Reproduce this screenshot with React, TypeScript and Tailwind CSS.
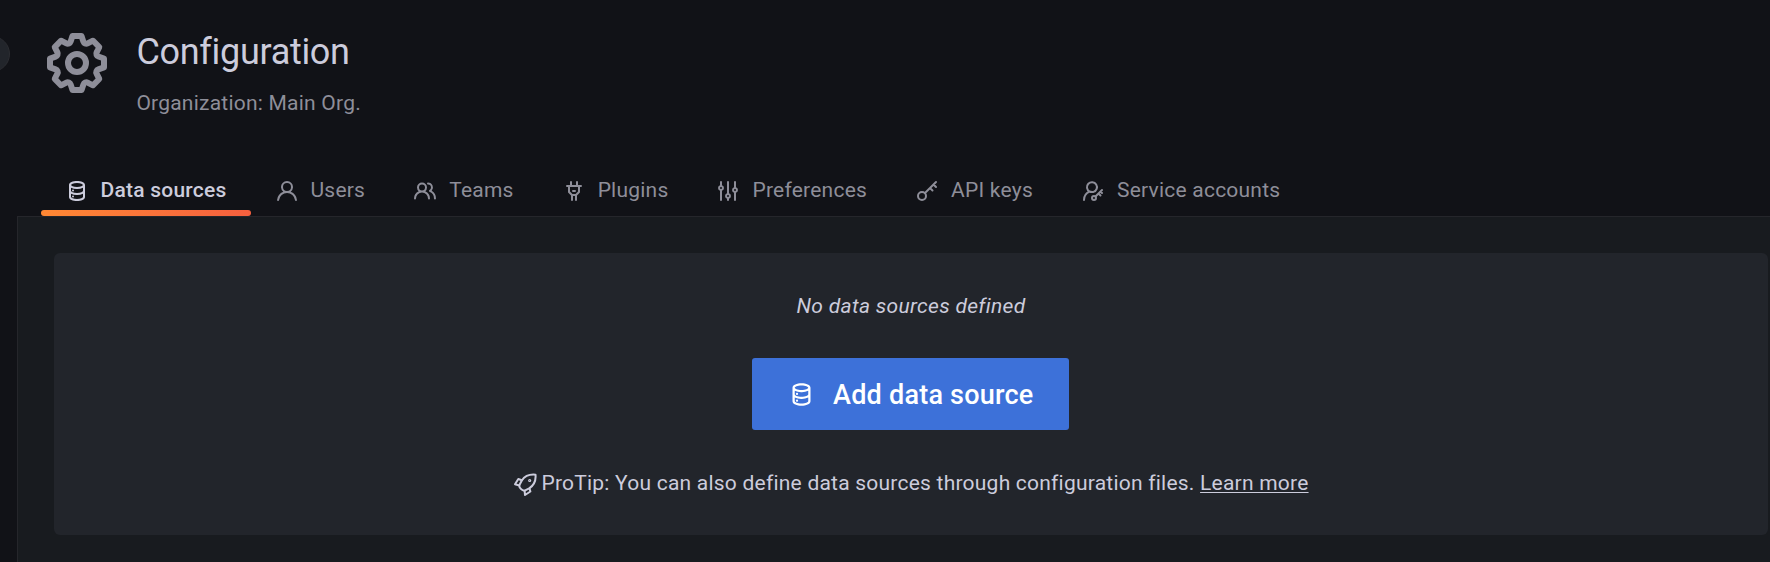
import type { ReactNode } from "react";

const paths = {
  cog: "M21.32,9.55l-1.89-.63.89-1.78A1,1,0,0,0,20.13,6L18,3.87a1,1,0,0,0-1.15-.19l-1.78.89-.63-1.89A1,1,0,0,0,13.5,2h-3a1,1,0,0,0-.95.68L8.92,4.57,7.14,3.68A1,1,0,0,0,6,3.87L3.87,6a1,1,0,0,0-.19,1.15l.89,1.78-1.89.63A1,1,0,0,0,2,10.5v3a1,1,0,0,0,.68.95l1.89.63-.89,1.78A1,1,0,0,0,3.87,18L6,20.13a1,1,0,0,0,1.15.19l1.78-.89.63,1.89a1,1,0,0,0,.95.68h3a1,1,0,0,0,.95-.68l.63-1.89,1.78.89A1,1,0,0,0,18,20.13L20.13,18a1,1,0,0,0,.19-1.15l-.89-1.78,1.89-.63A1,1,0,0,0,22,13.5v-3A1,1,0,0,0,21.32,9.55ZM20,12.78l-1.2.4A2,2,0,0,0,17.64,16l.57,1.14-1.1,1.1L16,17.64a2,2,0,0,0-2.79,1.16l-.4,1.2H11.22l-.4-1.2A2,2,0,0,0,8,17.64l-1.14.57-1.1-1.1L6.36,16A2,2,0,0,0,5.2,13.18L4,12.78V11.22l1.2-.4A2,2,0,0,0,6.36,8L5.79,6.89l1.1-1.1L8,6.36A2,2,0,0,0,10.82,5.2l.4-1.2h1.56l.4,1.2A2,2,0,0,0,16,6.36l1.14-.57,1.1,1.1L17.64,8a2,2,0,0,0,1.16,2.79l1.2.4ZM12,8a4,4,0,1,0,4,4A4,4,0,0,0,12,8Zm0,6a2,2,0,1,1,2-2A2,2,0,0,1,12,14Z",
  database: "M8,16.5a1,1,0,1,0,1,1A1,1,0,0,0,8,16.5ZM12,2C8,2,4,3.37,4,6V18c0,2.63,4,4,8,4s8-1.37,8-4V6C20,3.37,16,2,12,2Zm6,16c0,.71-2.28,2-6,2s-6-1.29-6-2V14.73A13.16,13.16,0,0,0,12,16a13.16,13.16,0,0,0,6-1.27Zm0-6c0,.71-2.28,2-6,2s-6-1.29-6-2V8.73A13.16,13.16,0,0,0,12,10a13.16,13.16,0,0,0,6-1.27ZM12,8C8.28,8,6,6.71,6,6s2.28-2,6-2,6,1.29,6,2S15.72,8,12,8ZM8,10.5a1,1,0,1,0,1,1A1,1,0,0,0,8,10.5Z",
  user: "M15.71,12.71a6,6,0,1,0-7.42,0,10,10,0,0,0-6.22,8.18,1,1,0,0,0,2,.22,8,8,0,0,1,15.9,0,1,1,0,0,0,1,.89h.11a1,1,0,0,0,.88-1.1A10,10,0,0,0,15.71,12.71ZM12,12a4,4,0,1,1,4-4A4,4,0,0,1,12,12Z",
  users: "M12.3,12.22A4.92,4.92,0,0,0,14,8.5a5,5,0,0,0-10,0,4.92,4.92,0,0,0,1.7,3.72A8,8,0,0,0,1,19.5a1,1,0,0,0,2,0,6,6,0,0,1,12,0,1,1,0,0,0,2,0A8,8,0,0,0,12.3,12.22ZM9,11.5a3,3,0,1,1,3-3A3,3,0,0,1,9,11.5Zm9.74.32A5,5,0,0,0,15,3.5a1,1,0,0,0,0,2,3,3,0,0,1,3,3,3,3,0,0,1-1.5,2.59,1,1,0,0,0-.5.84,1,1,0,0,0,.45.86l.39.26.13.07a7,7,0,0,1,4,6.38,1,1,0,0,0,2,0A9,9,0,0,0,18.74,11.82Z",
  plug: "M19,6H16V3a1,1,0,0,0-2,0V6H10V3A1,1,0,0,0,8,3V6H5A1,1,0,0,0,5,8H6v5a1,1,0,0,0,.29.71L9,16.41V21a1,1,0,0,0,2,0V17h2v4a1,1,0,0,0,2,0V16.41l2.71-2.7A1,1,0,0,0,18,13V8h1a1,1,0,0,0,0-2Zm-3,6.59L13.59,15H10.41L8,12.59V8h8ZM11,13h2a1,1,0,0,0,0-2H11a1,1,0,0,0,0,2Z",
  sliders: "M20,8.18V3a1,1,0,0,0-2,0V8.18a3,3,0,0,0,0,5.64V21a1,1,0,0,0,2,0V13.82a3,3,0,0,0,0-5.64ZM19,12a1,1,0,1,1,1-1A1,1,0,0,1,19,12Zm-6,2.18V3a1,1,0,0,0-2,0V14.18a3,3,0,0,0,0,5.64V21a1,1,0,0,0,2,0V19.82a3,3,0,0,0,0-5.64ZM12,18a1,1,0,1,1,1-1A1,1,0,0,1,12,18ZM6,6.18V3A1,1,0,0,0,4,3V6.18a3,3,0,0,0,0,5.64V21a1,1,0,0,0,2,0V11.82A3,3,0,0,0,6,6.18ZM5,10A1,1,0,1,1,6,9,1,1,0,0,1,5,10Z",
};

function Glyph({ name, className = "size-6" }: { name: keyof typeof paths; className?: string }) {
  return (
    <svg viewBox="0 0 24 24" fill="currentColor" className={`shrink-0 ${className}`}>
      <path d={paths[name]} />
    </svg>
  );
}

function Outline({ children, className = "" }: { children: ReactNode; className?: string }) {
  return (
    <svg
      viewBox="0 0 24 24"
      fill="none"
      stroke="currentColor"
      strokeWidth="2"
      strokeLinecap="round"
      strokeLinejoin="round"
      className={`size-6 shrink-0 ${className}`}
    >
      {children}
    </svg>
  );
}

const KeyIcon = () => (
  <Outline>
    <circle cx="7" cy="17" r="4" />
    <path d="M10 14 21 3M15 9l2.500 2.500M18.500 5.500 21 8" />
  </Outline>
);

const ServiceIcon = () => (
  <Outline>
    <path d="M3 21a9 9 0 0 1 5.500-8.300M12.500 12.900A5 5 0 1 0 8.500 12.500C9.500 13 11 13 12.500 12.900" />
    <circle cx="13" cy="19" r="2" />
    <path d="M14.500 17.500 21 11M17.500 14.500l2 2M19.500 12.500l1.500 1.500" />
  </Outline>
);

const RocketIcon = () => (
  <Outline className="mt-0.5">
    <path d="M22.500 1.700C15.500 1 11.500 3.500 8.800 7.500L6.300 12.300C6 14.500 9 18 11.700 17.700L16.200 15.400C20.500 12.500 23.200 8.500 22.500 1.700Z" />
    <path d="M8.800 7.200 5.300 6 2 11.200l4.300 1.300M16.500 15.500l.9 3-5.400 3.500-.4-4.300" />
    <circle cx="16.700" cy="7.500" r=".6" />
  </Outline>
);

const tabs: { label: string; icon: ReactNode; active?: boolean }[] = [
  { label: "Data sources", icon: <Glyph name="database" />, active: true },
  { label: "Users", icon: <Glyph name="user" /> },
  { label: "Teams", icon: <Glyph name="users" /> },
  { label: "Plugins", icon: <Glyph name="plug" /> },
  { label: "Preferences", icon: <Glyph name="sliders" /> },
  { label: "API keys", icon: <KeyIcon /> },
  { label: "Service accounts", icon: <ServiceIcon /> },
];

export default function App() {
  return (
    <div className="relative flex h-[562px] w-[1770px] flex-col overflow-hidden bg-[#111217] font-['Roboto',sans-serif] text-[21px] leading-[33px] tracking-[0.225px] text-[#ccccdc]">
      <div className="absolute top-9 -left-[26px] size-9 rounded-full border border-[#2c2d32] bg-[#22252b]" />
      <header className="flex h-[167px] pt-[27px] pl-[41px]">
        <Glyph name="cog" className="size-[72px] text-[#8e8e99]" />
        <div className="pl-[23.4px]">
          <h1 className="text-[36px] leading-[50px] tracking-[-0.3px]">Configuration</h1>
          <p className="pt-[10px] text-[#8e8e99]">Organization: Main Org.</p>
        </div>
      </header>
      <nav className="flex h-[49px] pl-[40.6px]">
        {tabs.map((tab) => (
          <div
            key={tab.label}
            className={`relative flex h-[49px] items-center gap-3 px-6 pb-px ${tab.active ? "font-medium" : "text-[#8e8e99]"}`}
          >
            {tab.icon}
            <span className="pb-px">{tab.label}</span>
            {tab.active && (
              <span className="absolute inset-x-0 bottom-0 h-1.5 rounded-[3px] bg-linear-to-r from-[#ff8833] to-[#f55f3e]" />
            )}
          </div>
        ))}
      </nav>
      <main className="ml-[17px] flex-1 border-t border-l border-[#25262b] bg-[#181b1f] pt-9 pr-0.5 pl-9">
        <section className="flex h-[282px] flex-col items-center rounded-md bg-[#22252b] pt-[37px]">
          <p className="tracking-[0.31px] italic">No data sources defined</p>
          <button className="mt-[35px] mr-px flex h-[72px] w-[317px] items-center gap-[18px] rounded-[3px] bg-[#3d71d9] pl-9 text-[27px] font-medium text-white">
            <Glyph name="database" className="size-[27px]" />
            <span className="pt-0.5">Add data source</span>
          </button>
          <p className="mt-[37px] flex items-center gap-1">
            <RocketIcon />
            <span>
              ProTip: You can also define data sources through configuration files.{" "}
              <a className="underline decoration-1 underline-offset-2">Learn more</a>
            </span>
          </p>
        </section>
      </main>
    </div>
  );
}
